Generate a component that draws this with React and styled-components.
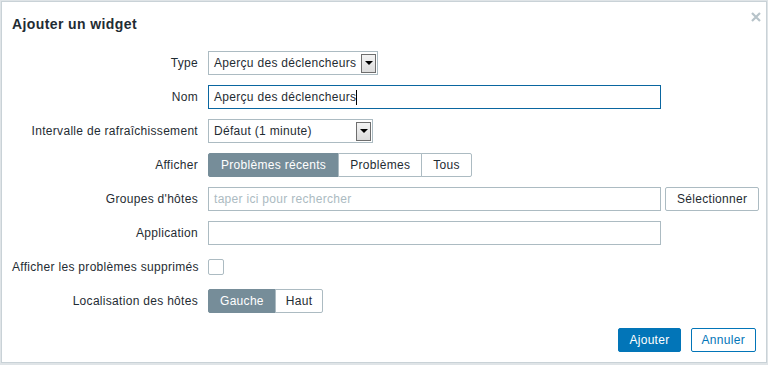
import React from "react";
import styled, { createGlobalStyle } from "styled-components";

const Global = createGlobalStyle`
  html, body { margin: 0; padding: 0; }
  body {
    background: #dfe4e7;
    font-family: "Liberation Sans", Arial, sans-serif;
    font-size: 12px;
    letter-spacing: 0.3px;
    color: #1f2c33;
  }
`;

const Page = styled.div`
  width: 768px;
  height: 365px;
  padding: 1px 1px 2px 1px;
  box-sizing: border-box;
`;

const Dialog = styled.div`
  position: relative;
  height: 100%;
  box-sizing: border-box;
  background: #fff;
  border: 1px solid #c9d2d7;
  padding: 0 10px;
  display: flex;
  flex-direction: column;
`;

const Header = styled.div`
  height: 49px;
  display: flex;
  align-items: flex-start;
`;

const Title = styled.h4`
  margin: 13px 0 0 0;
  font-size: 14px;
  font-weight: bold;
  letter-spacing: 0.4px;
  line-height: 18px;
  color: #1f2c33;
`;

const Close = styled.button`
  position: absolute;
  top: 9px;
  right: 4px;
  width: 12px;
  height: 12px;
  padding: 0;
  border: 0;
  background: none;
  display: flex;
  align-items: center;
  justify-content: center;
`;

const Form = styled.div`
  display: grid;
  grid-template-columns: 186px 1fr;
  column-gap: 10px;
  row-gap: 10px;
  align-items: center;
`;

const Label = styled.div`
  text-align: right;
  white-space: nowrap;
  line-height: 24px;
`;

const Field = styled.div`
  display: flex;
  align-items: center;
  gap: 4px;
  height: 24px;
`;

const Select = styled.div`
  width: ${(p) => p.$w}px;
  height: 24px;
  box-sizing: border-box;
  border: 1px solid #acbbc2;
  background: #fff;
  display: flex;
  align-items: center;
  justify-content: space-between;
  padding: 0 1px 0 5px;
`;

const Arrow = styled.span`
  width: 15px;
  height: 19px;
  box-sizing: border-box;
  border: 1px solid #6e6e6e;
  background: linear-gradient(#f4f4f4, #dcdcdc);
  display: flex;
  align-items: center;
  justify-content: center;
  &::after {
    content: "";
    border-left: 4px solid transparent;
    border-right: 4px solid transparent;
    border-top: 4px solid #000;
  }
`;

const Input = styled.div`
  width: ${(p) => p.$w || 453}px;
  height: 24px;
  box-sizing: border-box;
  border: 1px solid ${(p) => (p.$focus ? "#0a66a0" : "#acbbc2")};
  background: #fff;
  padding: 0 5px;
  display: flex;
  align-items: center;
  color: ${(p) => (p.$placeholder ? "#acbbc2" : "#1f2c33")};
  white-space: nowrap;
`;

const Caret = styled.span`
  display: inline-block;
  width: 1px;
  height: 15px;
  background: #000;
`;

const Segment = styled.div`
  display: flex;
  height: 24px;
`;

const SegBtn = styled.span`
  height: 24px;
  box-sizing: border-box;
  padding: 0 ${(p) => p.$pad || 11}px;
  display: flex;
  align-items: center;
  border: 1px solid ${(p) => (p.$active ? "#768d99" : "#acbbc2")};
  margin-left: -1px;
  background: ${(p) => (p.$active ? "#768d99" : "#fff")};
  color: ${(p) => (p.$active ? "#fff" : "#1f2c33")};
  &:first-child {
    margin-left: 0;
    border-radius: 2px 0 0 2px;
  }
  &:last-child {
    border-radius: 0 2px 2px 0;
  }
`;

const Button = styled.button`
  height: 24px;
  box-sizing: border-box;
  padding: 0 ${(p) => p.$pad || 11}px;
  margin: 0;
  font-family: inherit;
  font-size: 12px;
  letter-spacing: 0.3px;
  border-radius: 2px;
  border: 1px solid ${(p) => (p.$variant === "primary" || p.$variant === "outline" ? "#0275b8" : "#acbbc2")};
  background: ${(p) => (p.$variant === "primary" ? "#0275b8" : "#fff")};
  color: ${(p) =>
    p.$variant === "primary" ? "#fff" : p.$variant === "outline" ? "#0275b8" : "#1f2c33"};
`;

const Checkbox = styled.span`
  width: 16px;
  height: 16px;
  box-sizing: border-box;
  border: 1px solid #acbbc2;
  border-radius: 2px;
  background: #fff;
`;

const Footer = styled.div`
  margin-top: auto;
  margin-bottom: 10px;
  display: flex;
  justify-content: flex-end;
  gap: 10px;
`;

export default function App() {
  return (
    <>
      <Global />
      <Page>
        <Dialog>
          <Header>
            <Title>Ajouter un widget</Title>
          </Header>
          <Close aria-label="Fermer">
            <svg width="10" height="10" viewBox="0 0 10 10">
              <path d="M1 1 L9 9 M9 1 L1 9" stroke="#b7c3c9" strokeWidth="2.2" />
            </svg>
          </Close>
          <Form>
            <Label>Type</Label>
            <Field>
              <Select $w={170}>
                <span>Aperçu des déclencheurs</span>
                <Arrow />
              </Select>
            </Field>

            <Label>Nom</Label>
            <Field>
              <Input $focus>
                Aperçu des déclencheurs
                <Caret />
              </Input>
            </Field>

            <Label>Intervalle de rafraîchissement</Label>
            <Field>
              <Select $w={165}>
                <span>Défaut (1 minute)</span>
                <Arrow />
              </Select>
            </Field>

            <Label>Afficher</Label>
            <Field>
              <Segment>
                <SegBtn $active $pad={12}>Problèmes récents</SegBtn>
                <SegBtn $pad={11}>Problèmes</SegBtn>
                <SegBtn>Tous</SegBtn>
              </Segment>
            </Field>

            <Label>Groupes d'hôtes</Label>
            <Field>
              <Input $placeholder>taper ici pour rechercher</Input>
              <Button $pad={11}>Sélectionner</Button>
            </Field>

            <Label>Application</Label>
            <Field>
              <Input />
            </Field>

            <Label>Afficher les problèmes supprimés</Label>
            <Field>
              <Checkbox />
            </Field>

            <Label>Localisation des hôtes</Label>
            <Field>
              <Segment>
                <SegBtn $active $pad={11}>Gauche</SegBtn>
                <SegBtn $pad={10}>Haut</SegBtn>
              </Segment>
            </Field>
          </Form>
          <Footer>
            <Button $variant="primary" $pad={10}>Ajouter</Button>
            <Button $variant="outline" $pad={10}>Annuler</Button>
          </Footer>
        </Dialog>
      </Page>
    </>
  );
}
